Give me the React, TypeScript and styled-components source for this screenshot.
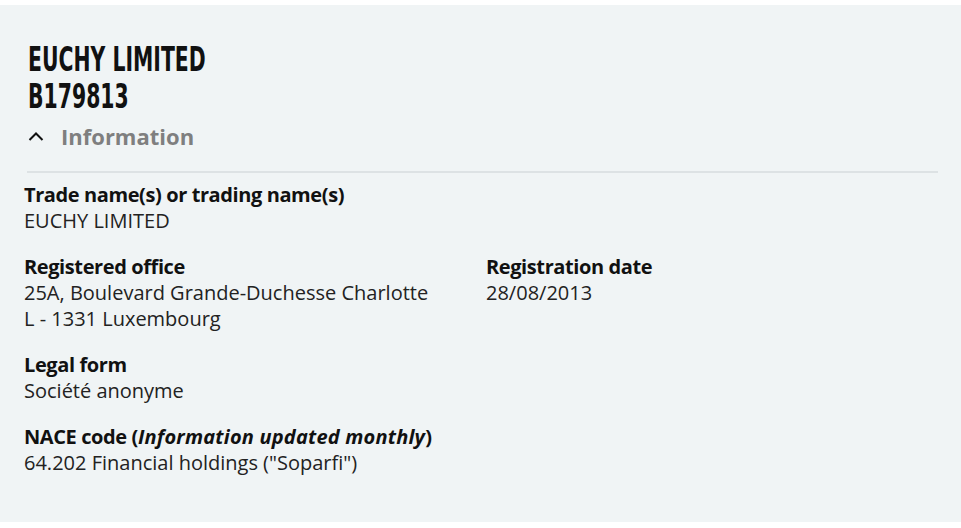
import styled, { createGlobalStyle } from "styled-components";

const GlobalStyle = createGlobalStyle`
  html, body {
    margin: 0;
    padding: 0;
    background: #ffffff;
  }
  body {
    font-family: "Open Sans", Lato, sans-serif;
    color: #1a1a1a;
  }
`;

const Page = styled.div`
  width: 961px;
  height: 528px;
  padding: 5px 0 6px;
  box-sizing: border-box;
`;

const Panel = styled.section`
  height: 100%;
  background: #f0f4f5;
  padding: 36px 23px 0 24px;
  box-sizing: border-box;
`;

// condensed display face, squeezed horizontally
const Title = styled.h1`
  margin: 0 0 0 4px;
  font-family: "DejaVu Sans", sans-serif;
  font-weight: 700;
  font-size: 34px;
  line-height: 37px;
  color: #111;
  transform: scaleX(0.6);
  transform-origin: left center;
`;

const Toggle = styled.button`
  display: flex;
  align-items: center;
  gap: 17px;
  margin: 6px 0 0 4px;
  padding: 0;
  border: 0;
  background: none;
  cursor: pointer;
  font-family: "Open Sans", sans-serif;
  font-weight: 700;
  font-size: 22px;
  line-height: 30px;
  color: #7f7f7f;
`;

const Divider = styled.hr`
  margin: 20px 0 9px 3px;
  border: 0;
  height: 2px;
  background: #dde2e4;
`;

const Grid = styled.div`
  display: grid;
  grid-template-columns: 1fr 1fr;
  column-gap: 10px;
  row-gap: 20px;
`;

const Field = styled.div<{ $full?: boolean }>`
  grid-column: ${(p) => (p.$full ? "1 / -1" : "auto")};
  font-size: 20px;
  line-height: 26px;
`;

const Label = styled.div`
  font-weight: 700;
  letter-spacing: -0.4px;
  color: #111;
  em {
    font-style: italic;
    letter-spacing: 0.2px;
  }
`;

const Value = styled.div`
  font-weight: 400;
  color: #222;
`;

const ChevronUp = () => (
  <svg width="16" height="10" viewBox="0 0 16 10" fill="none">
    <path d="M1.5 9 L8 2.5 L14.5 9" stroke="#111" strokeWidth="2" />
  </svg>
);

const App = () => (
  <>
    <GlobalStyle />
    <Page>
      <Panel>
        <Title>
          EUCHY LIMITED
          <br />
          B179813
        </Title>
        <Toggle>
          <ChevronUp />
          Information
        </Toggle>
        <Divider />
        <Grid>
          <Field $full>
            <Label>Trade name(s) or trading name(s)</Label>
            <Value>EUCHY LIMITED</Value>
          </Field>
          <Field>
            <Label>Registered office</Label>
            <Value>
              25A, Boulevard Grande-Duchesse Charlotte
              <br />L - 1331 Luxembourg
            </Value>
          </Field>
          <Field>
            <Label>Registration date</Label>
            <Value>28/08/2013</Value>
          </Field>
          <Field $full>
            <Label>Legal form</Label>
            <Value>Société anonyme</Value>
          </Field>
          <Field $full>
            <Label>
              NACE code (<em>Information updated monthly</em>)
            </Label>
            <Value>64.202 Financial holdings ("Soparfi")</Value>
          </Field>
        </Grid>
      </Panel>
    </Page>
  </>
);

export default App;
